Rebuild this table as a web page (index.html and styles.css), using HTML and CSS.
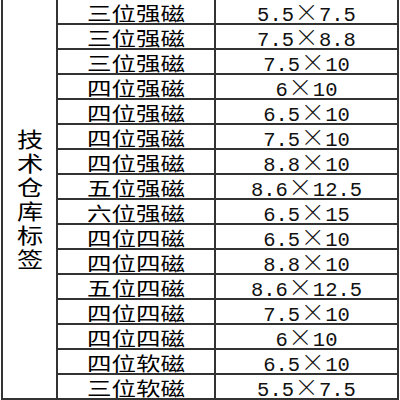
FILE: index.html
```html
<!DOCTYPE html>
<html lang="zh">
<head>
<meta charset="utf-8">
<link rel="stylesheet" href="styles.css">
</head>
<body>
<div class="sheet">
  <div class="cat"><span class="vt">技术仓库标签</span></div>
  <div class="c"><span class="zh">三位强磁</span></div><div class="c"><span class="num">5.5<span class="x">×</span>7.5</span></div>
  <div class="c"><span class="zh">三位强磁</span></div><div class="c"><span class="num">7.5<span class="x">×</span>8.8</span></div>
  <div class="c"><span class="zh">三位强磁</span></div><div class="c"><span class="num">7.5<span class="x">×</span>10</span></div>
  <div class="c"><span class="zh">四位强磁</span></div><div class="c"><span class="num">6<span class="x">×</span>10</span></div>
  <div class="c"><span class="zh">四位强磁</span></div><div class="c"><span class="num">6.5<span class="x">×</span>10</span></div>
  <div class="c"><span class="zh">四位强磁</span></div><div class="c"><span class="num">7.5<span class="x">×</span>10</span></div>
  <div class="c"><span class="zh">四位强磁</span></div><div class="c"><span class="num">8.8<span class="x">×</span>10</span></div>
  <div class="c"><span class="zh">五位强磁</span></div><div class="c"><span class="num">8.6<span class="x">×</span>12.5</span></div>
  <div class="c"><span class="zh">六位强磁</span></div><div class="c"><span class="num">6.5<span class="x">×</span>15</span></div>
  <div class="c"><span class="zh">四位四磁</span></div><div class="c"><span class="num">6.5<span class="x">×</span>10</span></div>
  <div class="c"><span class="zh">四位四磁</span></div><div class="c"><span class="num">8.8<span class="x">×</span>10</span></div>
  <div class="c"><span class="zh">五位四磁</span></div><div class="c"><span class="num">8.6<span class="x">×</span>12.5</span></div>
  <div class="c"><span class="zh">四位四磁</span></div><div class="c"><span class="num">7.5<span class="x">×</span>10</span></div>
  <div class="c"><span class="zh">四位四磁</span></div><div class="c"><span class="num">6<span class="x">×</span>10</span></div>
  <div class="c"><span class="zh">四位软磁</span></div><div class="c"><span class="num">6.5<span class="x">×</span>10</span></div>
  <div class="c"><span class="zh">三位软磁</span></div><div class="c"><span class="num">5.5<span class="x">×</span>7.5</span></div>
</div>
</body>
</html>
```
FILE: styles.css
```css
html, body {
  margin: 0;
  padding: 0;
  background: #fff;
  overflow: hidden;
}
body {
  width: 400px;
  height: 400px;
}
.sheet {
  display: grid;
  grid-template-columns: 53px 156px 181px;
  grid-auto-rows: 23px;
  gap: 2px;
  padding: 2px;
  background: #333;
  width: max-content;
  margin: -2px 0 0 1px;
  font-family: "Noto Sans CJK SC", sans-serif;
  color: #000;
}
.c, .cat {
  background: #fff;
  display: flex;
  align-items: center;
  justify-content: center;
}
.cat {
  grid-row: 1 / span 16;
  grid-column: 1;
}
.vt {
  writing-mode: vertical-rl;
  font-size: 21px;
  letter-spacing: 3px;
  line-height: 1;
  display: inline-block;
  padding-top: 3px;
  transform: scaleX(1.25);
}
.zh {
  display: inline-block;
  font-size: 19px;
  line-height: 21px;
  padding-top: 2px;
  transform: scaleX(1.29);
  white-space: nowrap;
}
.num {
  display: inline-block;
  font-family: "Liberation Mono", monospace;
  font-size: 20.5px;
  line-height: 21px;
  padding-top: 2px;
  color: #111;
  white-space: nowrap;
}
.x {
  display: inline-block;
  width: 25px;
  line-height: 21px;
  text-align: center;
  font-family: "Noto Sans CJK SC", sans-serif;
  font-size: 24px;
  font-weight: 300;
}
```
